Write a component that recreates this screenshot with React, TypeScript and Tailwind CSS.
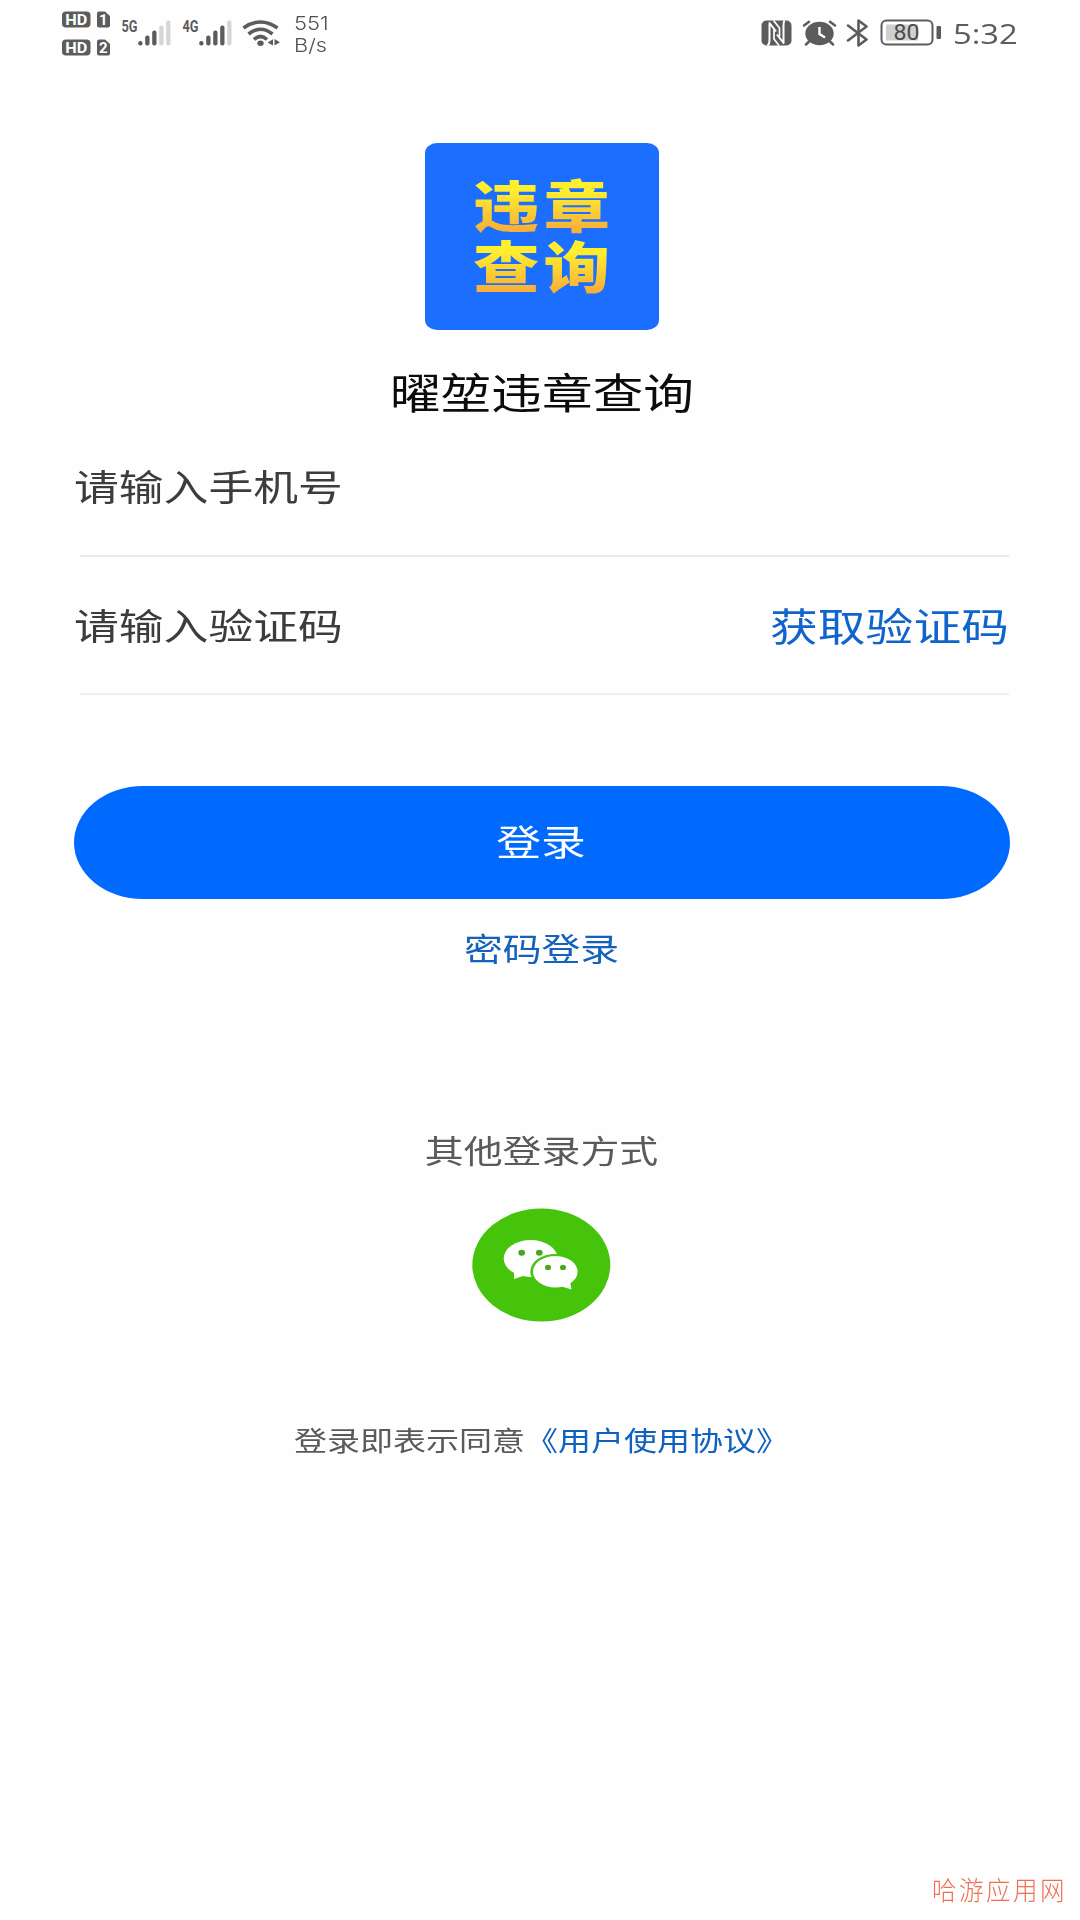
import React from "react";
import clsx from "clsx";

const WideText = ({
  children,
  className,
}: {
  children: React.ReactNode;
  className?: string;
}) => (
  <span
    className={clsx(
      "inline-block scale-y-[0.82] whitespace-nowrap pb-[0.09em] leading-none",
      className
    )}
  >
    {children}
  </span>
);

const SimBadges = () => (
  <svg width="50" height="46" viewBox="0 0 50 46" className="shrink-0">
    {[1, 2].map((sim) => (
      <g key={sim} transform={sim === 1 ? "translate(0 0)" : "translate(0 28)"}>
        <rect x="1" y="0.5" width="28.5" height="16" rx="4" fill="#5c5c5c" />
        <path d="M38 .5h6l5 4.5v9.500a2 2 0 0 1-2 2h-9a2 2 0 0 1-2-2v-12a2 2 0 0 1 2-2z" fill="#5c5c5c" />
        <text x="15.2" y="13.8" fontSize="15" fontWeight="700" fill="#fff" textAnchor="middle" textLength="22" lengthAdjust="spacingAndGlyphs">
          HD
        </text>
        <text x="42.3" y="13.8" fontSize="15" fontWeight="700" fill="#fff" textAnchor="middle">
          {sim}
        </text>
      </g>
    ))}
  </svg>
);

const Signal = ({ label, level }: { label: string; level: number }) => (
  <svg width="51" height="34" viewBox="0 -6 51 34" className="shrink-0">
    <text x="0.5" y="12.4" fontSize="16" fontWeight="700" fill="#5c5c5c" textLength="16" lengthAdjust="spacingAndGlyphs">
      {label}
    </text>
    {[4.5, 10, 15, 20, 25].map((h, i) => (
      <rect
        key={h}
        x={17.2 + i * 7}
        y={25.5 - h}
        width="4.3"
        height={h}
        rx="2"
        fill={i < level ? "#5c5c5c" : "#d6d6d6"}
      />
    ))}
  </svg>
);

const Wifi = () => (
  <svg width="39" height="28" viewBox="0 0 39 28" className="shrink-0">
    <g fill="none" stroke="#5c5c5c" strokeWidth="3.6">
      <path d="M1.500 8Q18.500-4 35.500 8" />
      <path d="M6.500 14Q18.500 4.500 30.500 14" />
      <path d="M12 19.500Q18.500 13.500 25 19.500" />
    </g>
    <ellipse cx="18.5" cy="23.3" rx="3.2" ry="2.7" fill="#5c5c5c" />
    <path d="M25.500 22.500l5.500-3.300v6.300zM32.500 19l5.500 3.300-5.500 3.300z" fill="#5c5c5c" />
  </svg>
);

const Nfc = () => (
  <svg width="31" height="26" viewBox="0 0 31 26">
    <rect x="0.5" y="0.5" width="30" height="25" rx="5" fill="#5c5c5c" />
    <g fill="none" stroke="#fff" strokeWidth="2" strokeLinejoin="round">
      <path d="M6.500 25.500Q8.500 24 8.500 20.500V3L15 11.500M23.500 .5Q22.500 2 22.500 5V23L16 14.500" />
      <path d="M12.500 .5L18.500 8v8.500M18 25.500L13 19V9.500" strokeWidth="1.7" />
    </g>
  </svg>
);

const Alarm = () => (
  <svg width="35" height="26" viewBox="0 0 35 26">
    <ellipse cx="17.5" cy="13.5" rx="14.2" ry="11.7" fill="#5c5c5c" />
    <g fill="none" stroke="#5c5c5c" strokeWidth="2.5" strokeLinecap="round">
      <path d="M2 5.500L7 1.800M33 5.500L28 1.800M7 21.500L4 24.500M28 21.500L31 24.500" />
    </g>
    <path d="M17.500 7v7l5.500 3.500" fill="none" stroke="#fff" strokeWidth="2.4" />
  </svg>
);

const Bluetooth = () => (
  <svg width="23" height="28" viewBox="0 0 23 28">
    <path
      d="M2 6.500L20.500 20.500 12.500 26.500V1.500l8 6L2 21.500"
      fill="none"
      stroke="#5c5c5c"
      strokeWidth="2.6"
      strokeLinecap="round"
      strokeLinejoin="round"
    />
  </svg>
);

const Battery = () => (
  <svg width="62" height="27" viewBox="0 0 62 27">
    <rect x="1.5" y="1.5" width="51" height="24" rx="5" fill="#fff" stroke="#5c5c5c" strokeWidth="2" />
    <rect x="6" y="5.5" width="32" height="16" fill="#cfcfcf" />
    <rect x="56.5" y="7" width="4.5" height="13" rx="1" fill="#5c5c5c" />
    <text x="26.5" y="21" fontSize="21.5" fill="#4a4a4a" textAnchor="middle" textLength="26" lengthAdjust="spacingAndGlyphs">
      80
    </text>
  </svg>
);

const StatusBar = () => (
  <header className="flex h-[66px] items-start justify-between pl-[61px] pr-[62px] font-['Roboto',sans-serif]">
    <div className="flex items-start">
      <div className="mt-[10.5px]">
        <SimBadges />
      </div>
      <div className="ml-[10px] mt-[13.5px] flex gap-[9.5px]">
        <Signal label="5G" level={3} />
        <Signal label="4G" level={4} />
      </div>
      <div className="ml-[9px] mt-[19.5px]">
        <Wifi />
      </div>
      <div className="ml-[13px] mt-[11.5px] flex origin-left scale-x-[1.18] flex-col font-['Inter',sans-serif] text-[18.5px] font-light leading-[22px] text-[#505050]">
        <span>551</span>
        <span>B/s</span>
      </div>
    </div>
    <div className="mt-[19.5px] flex items-start">
      <Nfc />
      <div className="ml-[9.5px]">
        <Alarm />
      </div>
      <div className="-mt-px ml-[9.5px]">
        <Bluetooth />
      </div>
      <div className="-mt-px ml-[11px]">
        <Battery />
      </div>
      <span className="-mt-[2px] ml-[11px] w-[65px] origin-left scale-x-[1.17] whitespace-nowrap font-['Open_Sans',sans-serif] text-[28px] leading-[30px] text-[#5c5c5c]">
        5:32
      </span>
    </div>
  </header>
);

const Logo = () => (
  <div className="mt-[77px] flex h-[187px] w-[234px] items-center justify-center rounded-[12px/10px] bg-[#1c6eff] pb-[5px] pl-[3px]">
    {/* the gradient repeats once per row of text */}
    <span className="scale-y-[0.83] whitespace-nowrap bg-[linear-gradient(#ffee2e_30%,#f8ae38_95%)] bg-[length:100%_50%] bg-clip-text text-[66.5px] font-black leading-[73px] tracking-[4px] text-transparent">
      违章
      <br />
      查询
    </span>
  </div>
);

const WeChat = () => (
  <svg width="139" height="114" viewBox="0 0 139 114">
    <ellipse cx="69.3" cy="57" rx="69" ry="56.5" fill="#46c30b" />
    <ellipse cx="58.7" cy="50.5" rx="27" ry="18.5" fill="#fff" />
    <path d="M42 60l0 11 12-4z" fill="#fff" />
    <ellipse cx="83.3" cy="63.7" rx="25" ry="17.8" fill="#46c30b" />
    <ellipse cx="83.3" cy="63.7" rx="22.3" ry="15.700" fill="#fff" />
    <path d="M88 78l11.500 3.500-1.500-8z" fill="#fff" />
    <g fill="#46a81a">
      <ellipse cx="49.7" cy="44.7" rx="3.4" ry="3" />
      <ellipse cx="67.3" cy="44.7" rx="3.4" ry="3" />
      <ellipse cx="76" cy="59.4" rx="3" ry="2.7" />
      <ellipse cx="91" cy="59.4" rx="3" ry="2.7" />
    </g>
  </svg>
);

const App = () => {
  return (
    <main className="flex h-[1920px] w-[1080px] flex-col overflow-hidden bg-[#fefefe] font-['Noto_Sans_CJK_SC',sans-serif]">
      <StatusBar />

      <section className="flex flex-col items-center pl-[4px]">
        <Logo />
        <h1 className="mt-[33px] flex h-[60px] items-center text-[50.7px] text-[#0c0c0c]">
          <WideText>曜堃违章查询</WideText>
        </h1>
      </section>

      <form className="flex flex-col pl-[74px] pr-[70px]">
        <label className="mt-[35px] flex h-[58px] items-center text-[44.8px] text-[#3c3c3c]">
          <WideText>请输入手机号</WideText>
        </label>
        <div className="ml-[6px] mr-px mt-[39px] h-[2px] bg-[#ebebeb]" />
        <div className="mt-[40px] flex h-[58px] items-center justify-between">
          <WideText className="text-[44.8px] text-[#3c3c3c]">
            请输入验证码
          </WideText>
          <WideText className="mr-px text-[47.8px] text-[#0f65cc]">
            获取验证码
          </WideText>
        </div>
        <div className="ml-[6px] mr-px mt-[38px] h-[2px] bg-[#eee]" />
        <button
          type="button"
          className="mt-[91px] flex h-[113px] items-center justify-center rounded-[69px/56.5px] bg-[#006aff] pr-[2px] text-[44.8px] text-white"
        >
          <WideText>登录</WideText>
        </button>
      </form>

      <section className="flex flex-col items-center pl-[3px]">
        <a className="mt-[25px] flex h-[50px] items-center text-[38.8px] text-[#1562bd]">
          <WideText>密码登录</WideText>
        </a>
        <h2 className="mt-[152px] flex h-[50px] items-center text-[38.9px] text-[#5a5a5a]">
          <WideText>其他登录方式</WideText>
        </h2>
        <div className="mt-[32px]">
          <WeChat />
        </div>
        <p className="mt-[99px] flex h-[40px] items-center text-[33px] text-[#5a5a5a]">
          <WideText>登录即表示同意</WideText>
          <WideText className="text-[#0f62bd]">《用户使用协议》</WideText>
        </p>
      </section>

      <footer className="mb-[15px] mr-[13px] mt-auto flex h-[30px] scale-y-105 items-center justify-end text-[24.5px] font-light leading-none tracking-[2.5px] text-[#ee6f52]">
        哈游应用网
      </footer>
    </main>
  );
};

export default App;
